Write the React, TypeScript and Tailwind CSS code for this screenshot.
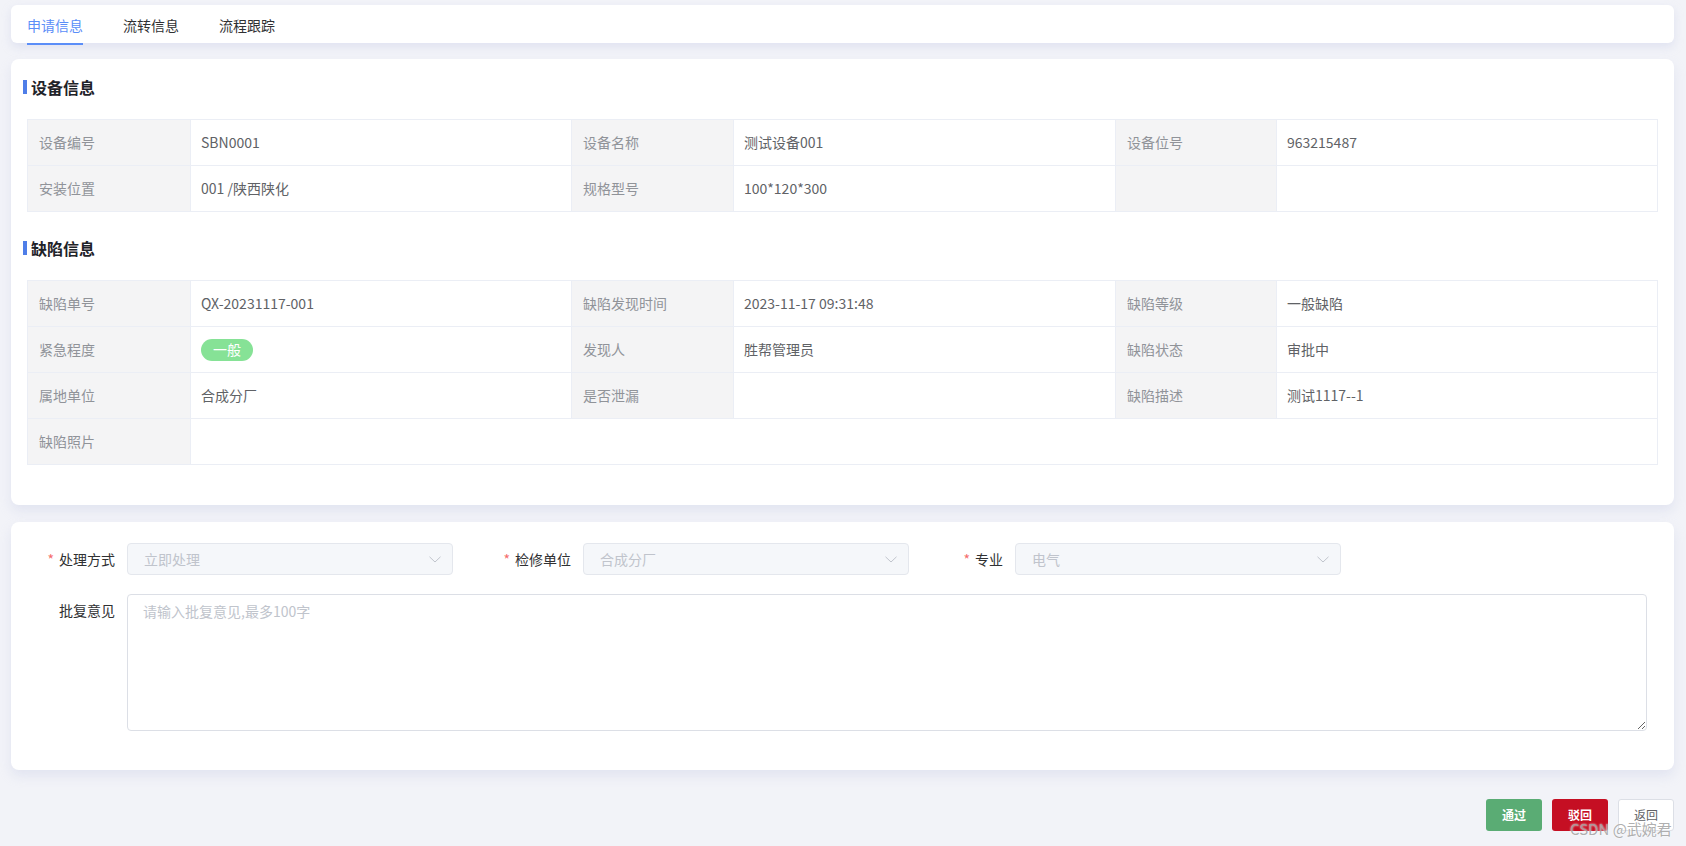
import React from 'react'

const font = "font-['Noto_Sans_CJK_SC','Noto_Sans',sans-serif]"

type Cell = { label?: string; value?: React.ReactNode; span?: boolean }

function SectionTitle({ title, first }: { title: string; first?: boolean }) {
  return (
    <div className={`-ml-1 flex h-[24px] items-center gap-1 ${first ? '' : 'mt-[24px]'} mb-[20px]`}>
      <span className="h-[14px] w-[4px] bg-[#4f7ee8]" />
      <span className="text-[16px] font-bold text-[#1f2329]">{title}</span>
    </div>
  )
}

function Descriptions({ rows }: { rows: Cell[][] }) {
  return (
    <div className="grid grid-cols-[163px_381px_162px_382px_161px_1fr] border-t border-l border-[#ebeef5] text-[14px]">
      {rows.map((row, i) =>
        row.map((c, j) => (
          <React.Fragment key={`${i}-${j}`}>
            <div className="flex h-[46px] items-center border-r border-b border-[#ebeef5] bg-[#f4f4f5] px-[11px] text-[#909399]">
              {c.label}
            </div>
            <div
              className={`flex h-[46px] items-center border-r border-b border-[#ebeef5] bg-white px-[10px] text-[#606266] ${
                c.span ? 'col-span-5' : ''
              }`}
            >
              {c.value}
            </div>
          </React.Fragment>
        ))
      )}
    </div>
  )
}

function Chevron() {
  return (
    <svg width="12" height="7" viewBox="0 0 12 7" fill="none">
      <path d="M0.5 0.8 L6 6 L11.5 0.8" stroke="#c0c4cc" strokeWidth="1" />
    </svg>
  )
}

function DisabledSelect({ value }: { value: string }) {
  return (
    <div className="flex h-[32px] items-center justify-between rounded-[4px] border border-[#e4e7ed] bg-[#f5f7fa] pl-[16px] pr-[11px] text-[14px] text-[#c0c4cc]">
      <span>{value}</span>
      <Chevron />
    </div>
  )
}

function FormLabel({ text, required }: { text: string; required?: boolean }) {
  return (
    <div className="flex h-[32px] items-center justify-end pr-[12px] text-[14px] text-[#303133]">
      {required && <span className="mr-[5px] text-[#f56c6c]">*</span>}
      {text}
    </div>
  )
}

export default function App() {
  const tabs = ['申请信息', '流转信息', '流程跟踪']

  const deviceRows: Cell[][] = [
    [
      { label: '设备编号', value: 'SBN0001' },
      { label: '设备名称', value: '测试设备001' },
      { label: '设备位号', value: '963215487' },
    ],
    [
      { label: '安装位置', value: '001 /陕西陕化' },
      { label: '规格型号', value: '100*120*300' },
      { label: '', value: '' },
    ],
  ]

  const defectRows: Cell[][] = [
    [
      { label: '缺陷单号', value: 'QX-20231117-001' },
      { label: '缺陷发现时间', value: '2023-11-17 09:31:48' },
      { label: '缺陷等级', value: '一般缺陷' },
    ],
    [
      {
        label: '紧急程度',
        value: (
          <span className="flex h-[22px] w-[52px] items-center justify-center rounded-full bg-[#86e296] text-[14px] text-white">
            一般
          </span>
        ),
      },
      { label: '发现人', value: '胜帮管理员' },
      { label: '缺陷状态', value: '审批中' },
    ],
    [
      { label: '属地单位', value: '合成分厂' },
      { label: '是否泄漏', value: '' },
      { label: '缺陷描述', value: '测试1117--1' },
    ],
    [{ label: '缺陷照片', value: '', span: true }],
  ]

  return (
    <div className={`relative min-h-[846px] bg-[#f2f3f8] pt-[5px] pl-[11px] pr-[12px] ${font}`}>
      {/* tabs */}
      <div className="flex h-[38px] rounded-[6px] bg-white pl-[16px] shadow-[0_4px_10px_rgba(190,196,225,0.35)]">
        <div className="flex gap-[40px]">
          {tabs.map((t, i) => (
            <div
              key={t}
              className={`flex h-[40px] items-center text-[14px] ${
                i === 0 ? 'border-b-2 border-[#5b8ef8] pt-[2px] text-[#5b8ef8]' : 'text-[#303133]'
              }`}
            >
              {t}
            </div>
          ))}
        </div>
      </div>

      {/* info card */}
      <div className="mt-[16px] rounded-[8px] bg-white px-[16px] pt-[16px] pb-[40px] shadow-[0_6px_12px_rgba(190,196,225,0.3)]">
        <SectionTitle title="设备信息" first />
        <Descriptions rows={deviceRows} />
        <SectionTitle title="缺陷信息" />
        <Descriptions rows={defectRows} />
      </div>

      {/* approve form */}
      <div className="mt-[17px] rounded-[8px] bg-white px-[16px] pt-[21px] pb-[39px] shadow-[0_6px_12px_rgba(190,196,225,0.3)]">
        <div className="grid grid-cols-[100px_326px_130px_326px_106px_326px]">
          <FormLabel text="处理方式" required />
          <DisabledSelect value="立即处理" />
          <FormLabel text="检修单位" required />
          <DisabledSelect value="合成分厂" />
          <FormLabel text="专业" required />
          <DisabledSelect value="电气" />
        </div>
        <div className="mt-[19px] flex">
          <div className="w-[100px]">
            <FormLabel text="批复意见" />
          </div>
          <textarea
            className="mr-[11px] h-[137px] flex-1 rounded-[4px] border border-[#dcdfe6] px-[15px] py-[5px] text-[14px] leading-[22px] text-[#606266] outline-none placeholder:text-[#c0c4cc]"
            placeholder="请输入批复意见,最多100字"
          />
        </div>
      </div>

      {/* actions */}
      <div className="mt-[29px] flex justify-end gap-[10px]">
        <button className="h-[32px] w-[56px] rounded-[3px] bg-[#5aac74] text-[12px] font-bold text-white">通过</button>
        <button className="h-[32px] w-[56px] rounded-[3px] bg-[#c50f23] text-[12px] font-bold text-white">驳回</button>
        <button className="h-[32px] w-[56px] rounded-[3px] border border-[#dcdfe6] bg-white text-[12px] text-[#606266]">
          返回
        </button>
      </div>

      <div className="pointer-events-none absolute left-[1570px] top-[818px] text-[15px] text-[#9a9a9a]/80 [text-shadow:0_0_2px_#fff]">
        CSDN @武婉君
      </div>
    </div>
  )
}
